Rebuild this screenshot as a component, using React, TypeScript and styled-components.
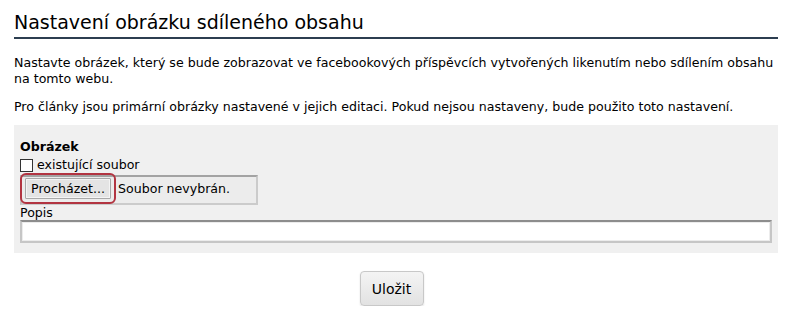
import React from 'react'
import styled, { createGlobalStyle } from 'styled-components'

const GlobalStyle = createGlobalStyle`
  body {
    margin: 0;
    background: #ffffff;
    font-family: "DejaVu Sans", Verdana, sans-serif;
    font-size: 12.6px;
    color: #000;
  }
`

const Page = styled.div`
  padding: 10px 15px 0 14px;
`

const Heading = styled.h1`
  margin: 0;
  padding-bottom: 3px;
  font-size: 19px;
  font-weight: normal;
  line-height: 24px;
  color: #000;
  border-bottom: 2px solid #2c3e50;
`

const Text = styled.p<{ top?: number }>`
  margin: ${({ top }) => top ?? 12}px 0 0;
  line-height: 16px;
`

const FormBox = styled.div`
  margin-top: 10px;
  background: #f0f0f0;
  padding: 14px 6px 10px 6px;
  display: flex;
  flex-direction: column;
`

const FieldTitle = styled.div`
  font-weight: bold;
  line-height: 16px;
`

const CheckRow = styled.label`
  display: flex;
  align-items: center;
  gap: 4px;
  line-height: 16px;
  margin-top: 2px;
`

const Check = styled.input`
  appearance: none;
  margin: 0;
  width: 13px;
  height: 13px;
  border: 1px solid #333;
  background: #fff;
`

const FileBox = styled.div`
  margin-top: 2px;
  width: 238px;
  height: 30px;
  box-sizing: border-box;
  display: flex;
  align-items: flex-start;
  gap: 7px;
  padding: 1px 0 0 3px;
  background: #ececec;
  border: 2px solid #cbcbcb;
  border-top-color: #a3a3a3;
  border-left-color: #c4c4c4;
`

const FileButton = styled.button`
  height: 21px;
  width: 86px;
  padding: 0;
  font-family: inherit;
  font-size: 12.6px;
  font-weight: normal;
  color: #000;
  background: #e4e4e4;
  border: 1px solid #a9a9a9;
  outline: 2px solid #b23441;
  outline-offset: 3px;
  border-radius: 1px;
  box-shadow: inset 0 0 0 1px #f4f4f4;
`

const FileName = styled.span`
  line-height: 22px;
`

const FieldLabel = styled.label`
  line-height: 15px;
`

const TextField = styled.input`
  margin-top: 0;
  height: 23px;
  box-sizing: border-box;
  width: 100%;
  border: 2px solid #c6c6c6;
  border-top-color: #8d8d8d;
  background: #fff;
  box-shadow: inset 0 0 0 1px #ececec;
  font-family: inherit;
  font-size: 13px;
`

const Actions = styled.div`
  display: flex;
  justify-content: center;
  padding-right: 9px;
  margin-top: 18px;
`

const SaveButton = styled.button`
  width: 64px;
  height: 35px;
  font-family: inherit;
  font-size: 14px;
  font-weight: normal;
  color: #000;
  border: 1px solid #c8c8c8;
  border-radius: 4px;
  background: linear-gradient(#f4f4f4, #e2e2e2);
  box-shadow: 0 1px 2px rgba(0, 0, 0, 0.12);
`

export default function App() {
  return (
    <>
      <GlobalStyle />
      <Page>
        <Heading>Nastavení obrázku sdíleného obsahu</Heading>
        <Text top={16}>
          Nastavte obrázek, který se bude zobrazovat ve facebookových příspěvcích vytvořených likenutím nebo sdílením obsahu
          na tomto webu.
        </Text>
        <Text>
          Pro články jsou primární obrázky nastavené v jejich editaci. Pokud nejsou nastaveny, bude použito toto nastavení.
        </Text>
        <FormBox>
          <FieldTitle>Obrázek</FieldTitle>
          <CheckRow>
            <Check type="checkbox" />
            existující soubor
          </CheckRow>
          <FileBox>
            <FileButton>Procházet...</FileButton>
            <FileName>Soubor nevybrán.</FileName>
          </FileBox>
          <FieldLabel>Popis</FieldLabel>
          <TextField type="text" />
        </FormBox>
        <Actions>
          <SaveButton>Uložit</SaveButton>
        </Actions>
      </Page>
    </>
  )
}
